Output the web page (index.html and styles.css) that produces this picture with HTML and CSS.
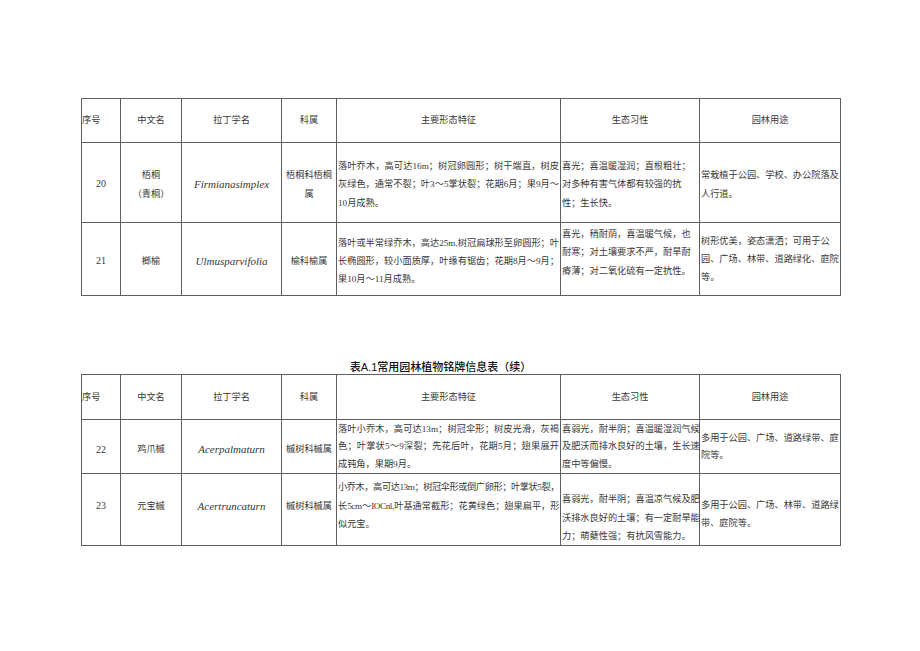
FILE: index.html
```html
<!DOCTYPE html>
<html lang="zh-CN">
<head>
<meta charset="utf-8">
<title>常用园林植物铭牌信息表</title>
<link rel="stylesheet" href="styles.css">
</head>
<body>
<div class="page">
  <table class="plant-table first">
    <colgroup>
      <col class="c-no"><col class="c-cn"><col class="c-latin"><col class="c-fam"><col class="c-morph"><col class="c-eco"><col class="c-use">
    </colgroup>
    <tr class="r-head">
      <th class="h-left">序号</th><th>中文名</th><th>拉丁学名</th><th>科属</th><th>主要形态特征</th><th>生态习性</th><th>园林用途</th>
    </tr>
    <tr class="r-20">
      <td class="ctr num">20</td>
      <td class="ctr">梧桐<br>（青桐）</td>
      <td class="ctr latin">Firmianasimplex</td>
      <td class="ctr">梧桐科梧桐<br>属</td>
      <td class="txt"><span class="ln">落叶乔木，高可达16m；树冠卵圆形；树干端直，树皮</span><span class="ln">灰绿色，通常不裂；叶3～5掌状裂；花期6月；果9月～</span><span class="ln last">10月成熟。</span></td>
      <td class="txt">喜光；喜温暖湿润；直根粗壮；<br>对多种有害气体都有较强的抗<br>性；生长快。</td>
      <td class="txt">常栽植于公园、学校、办公院落及<br>人行道。</td>
    </tr>
    <tr class="r-21">
      <td class="ctr num">21</td>
      <td class="ctr">榔榆</td>
      <td class="ctr latin">Ulmusparvifolia</td>
      <td class="ctr">榆科榆属</td>
      <td class="txt"><span class="ln">落叶或半常绿乔木，高达25m,树冠扁球形至卵圆形；叶</span><span class="ln">长椭圆形，较小面质厚，叶缘有锯齿；花期8月～9月；</span><span class="ln last">果10月～11月成熟。</span></td>
      <td class="txt top">喜光，稍耐荫，喜温暖气候，也<br>耐寒；对土壤要求不严，耐旱耐<br>瘠薄；对二氧化硫有一定抗性。</td>
      <td class="txt flat">树形优美，姿态潇洒；可用于公<br>园、广场、林带、道路绿化、庭院<br>等。</td>
    </tr>
  </table>

  <div class="caption">表A.1常用园林植物铭牌信息表（续）</div>

  <table class="plant-table second">
    <colgroup>
      <col class="c-no"><col class="c-cn"><col class="c-latin"><col class="c-fam"><col class="c-morph"><col class="c-eco"><col class="c-use">
    </colgroup>
    <tr class="r-head">
      <th class="h-left">序号</th><th>中文名</th><th>拉丁学名</th><th>科属</th><th>主要形态特征</th><th>生态习性</th><th>园林用途</th>
    </tr>
    <tr class="r-22">
      <td class="ctr num">22</td>
      <td class="ctr">鸡爪槭</td>
      <td class="ctr latin">Acerpalmaturn</td>
      <td class="ctr">槭树科槭属</td>
      <td class="txt"><span class="ln">落叶小乔木，高可达13m；树冠伞形；树皮光滑，灰褐</span><span class="ln">色；叶掌状5～9深裂；先花后叶，花期5月；翅果展开</span><span class="ln last">成钝角，果期9月。</span></td>
      <td class="txt">喜弱光，耐半阴；喜温暖湿润气候<br>及肥沃而排水良好的土壤，生长速<br>度中等偏慢。</td>
      <td class="txt">多用于公园、广场、道路绿带、庭<br>院等。</td>
    </tr>
    <tr class="r-23">
      <td class="ctr num">23</td>
      <td class="ctr">元宝槭</td>
      <td class="ctr latin">Acertruncaturn</td>
      <td class="ctr">槭树科槭属</td>
      <td class="txt"><span class="ln tight">小乔木，高可达13m；树冠伞形或倒广卵形；叶掌状5裂，</span><span class="ln tight">长5cm～IOCnl,叶基通常截形；花黄绿色；翅果扁平，形</span><span class="ln last">似元宝。</span></td>
      <td class="txt bottom">喜弱光，耐半阴；喜温凉气候及肥<br>沃排水良好的土壤；有一定耐旱能<br>力；萌蘖性强；有抗风雪能力。</td>
      <td class="txt lower">多用于公园、广场、林带、道路绿<br>带、庭院等。</td>
    </tr>
  </table>
</div>
</body>
</html>
```

FILE: styles.css
```css
* {
  box-sizing: border-box;
}

body {
  margin: 0;
  background: #ffffff;
  font-family: "Liberation Serif", "Noto Sans CJK SC", serif;
  color: #383838;
}

.page {
  padding: 98px 0 0 81px;
}

.plant-table {
  border-collapse: collapse;
  table-layout: fixed;
  width: 759px;
  font-size: 9.2px;
  line-height: 18.3px;
}

.plant-table th,
.plant-table td {
  border: 1px solid #5e5e5e;
  padding: 0 1px;
  vertical-align: middle;
  font-weight: normal;
  white-space: nowrap;
  overflow: visible;
}

.c-no { width: 39px; }
.c-cn { width: 61px; }
.c-latin { width: 100px; }
.c-fam { width: 55px; }
.c-morph { width: 224px; }
.c-eco { width: 139px; }
.c-use { width: 141px; }

.plant-table th {
  text-align: center;
}

.plant-table th.h-left {
  text-align: left;
  padding-left: 0;
}

.first .r-head { height: 44px; }
.second .r-head { height: 45px; }

.r-20 { height: 80px; }
.r-20 td { padding-top: 4px; }

.r-21 { height: 73px; }
.r-21 td { padding-top: 4px; }

.r-22 { height: 54px; }
.r-22 td {
  line-height: 17.4px;
  padding-top: 1px;
}
.r-22 td.num,
.r-22 td.ctr {
  padding-top: 6px;
}

.r-23 { height: 72px; }
.r-23 td { padding-bottom: 8px; }

.ctr {
  text-align: center;
}

.num {
  font-size: 10px;
}

.latin {
  font-style: italic;
  font-size: 11px;
}

.txt {
  text-align: left;
}

.ln {
  display: block;
  text-align: justify;
  text-align-last: justify;
}

.ln.last {
  text-align-last: left;
}

.ln.tight {
  letter-spacing: -0.45px;
}

.plant-table td.top {
  vertical-align: top;
  padding-top: 2px;
}

.plant-table td.flat {
  padding-top: 0;
}

.plant-table td.bottom {
  vertical-align: bottom;
  padding-bottom: 0;
}

.plant-table td.lower {
  padding-bottom: 0;
  padding-top: 9px;
}

.caption {
  margin-top: 64px;
  width: 759px;
  padding-right: 40px;
  text-align: center;
  font-family: "Liberation Sans", "Noto Sans CJK SC", sans-serif;
  font-size: 11px;
  font-weight: 500;
  line-height: 14px;
  color: #111;
}
```
